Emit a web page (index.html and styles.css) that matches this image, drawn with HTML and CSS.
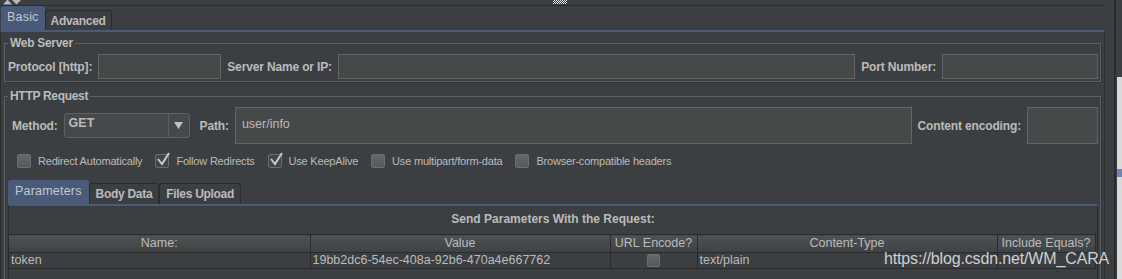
FILE: index.html
```html
<!DOCTYPE html>
<html lang="en">
<head>
    <meta charset="UTF-8">
    <title>HTTP Request</title>
    <link rel="stylesheet" href="styles.css">
</head>
<body>
    <div class="app">
        <div class="editor">
            <div class="split">
                <svg class="expand" width="20" height="5" viewBox="0 0 20 5">
                    <polygon points="1,4.5 5.5,-0.5 10,4.5" fill="#b8b8b8"/>
                    <polygon points="10,0 19,0 14.5,4.5" fill="#b8b8b8"/>
                </svg>
                <div class="grip"></div>
            </div>
            <div class="tabs">
                <div class="tab selected">Basic</div>
                <div class="tab">Advanced</div>
            </div>
            <div class="tabpanel">
                <fieldset class="group">
                    <legend>Web Server</legend>
                    <div class="row">
                        <label>Protocol [http]:</label>
                        <div class="field protocol"></div>
                        <label>Server Name or IP:</label>
                        <div class="field grow"></div>
                        <label>Port Number:</label>
                        <div class="field port"></div>
                    </div>
                </fieldset>
                <fieldset class="group request">
                    <legend>HTTP Request</legend>
                    <div class="row request-row">
                        <label>Method:</label>
                        <div class="combo">
                            <span class="combo-value">GET</span>
                            <span class="combo-btn">
                                <svg width="9" height="7" viewBox="0 0 9 7"><polygon points="0,0 9,0 4.5,7" fill="#c0c0c0"/></svg>
                            </span>
                        </div>
                        <label class="path-label">Path:</label>
                        <div class="field grow tall">user/info</div>
                        <label>Content encoding:</label>
                        <div class="field encoding tall"></div>
                    </div>
                    <div class="options">
                        <span class="check"><span class="box"></span>Redirect Automatically</span>
                        <span class="check"><span class="box checked"><svg width="16" height="16" viewBox="0 0 16 16"><polyline points="3,7 7,12 14,1" fill="none" stroke="#c9c9c9" stroke-width="2"/></svg></span>Follow Redirects</span>
                        <span class="check"><span class="box checked"><svg width="16" height="16" viewBox="0 0 16 16"><polyline points="3,7 7,12 14,1" fill="none" stroke="#c9c9c9" stroke-width="2"/></svg></span>Use KeepAlive</span>
                        <span class="check"><span class="box"></span>Use multipart/form-data</span>
                        <span class="check"><span class="box"></span>Browser-compatible headers</span>
                    </div>
                    <div class="subtabs">
                        <div class="tab selected">Parameters</div>
                        <div class="tab">Body Data</div>
                        <div class="tab">Files Upload</div>
                    </div>
                    <div class="subpanel">
                        <div class="subtitle">Send Parameters With the Request:</div>
                        <table class="params">
                            <colgroup>
                                <col style="width:301px">
                                <col style="width:300px">
                                <col style="width:87px">
                                <col style="width:300px">
                                <col style="width:98px">
                            </colgroup>
                            <tr>
                                <th>Name:</th>
                                <th>Value</th>
                                <th>URL Encode?</th>
                                <th>Content-Type</th>
                                <th>Include Equals?</th>
                            </tr>
                            <tr>
                                <td>token</td>
                                <td>19bb2dc6-54ec-408a-92b6-470a4e667762</td>
                                <td class="center"><span class="box small"></span></td>
                                <td>text/plain</td>
                                <td></td>
                            </tr>
                        </table>
                    </div>
                </fieldset>
            </div>
        </div>
        <div class="side">
            <div class="side-line"></div>
            <div class="side-strip"></div>
        </div>
    </div>
    <div class="watermark">https://blog.csdn.net/WM_CARA</div>
</body>
</html>
```

FILE: styles.css
```css
body {
    margin: 0;
    width: 1122px;
    height: 279px;
    overflow: hidden;
    position: relative;
    background: #3c3f41;
    color: #bbbbbb;
    font-family: "Liberation Sans", Arial, sans-serif;
    font-size: 12px;
}
.app {
    display: flex;
    height: 279px;
}
.editor {
    width: 1105px;
    flex: none;
    display: flex;
    flex-direction: column;
}
.split {
    height: 6px;
    border-bottom: 1px solid #2b2b2b;
    display: flex;
    align-items: flex-start;
}
.expand {
    margin-left: 2px;
}
.grip {
    width: 14px;
    height: 4px;
    margin-left: 531px;
    background: repeating-conic-gradient(#e2e2e2 0 25%, transparent 0 50%) 0 0 / 2px 2px;
}
.tabs,
.subtabs {
    display: flex;
    align-items: flex-end;
}
.tabs {
    height: 25px;
    padding-left: 1px;
}
.tab {
    font-weight: bold;
    letter-spacing: -0.3px;
    height: 19px;
    line-height: 20px;
    padding: 0 5px;
    border: 1px solid #2b2b2b;
    border-bottom: none;
    border-radius: 3px 3px 0 0;
    background: #3c3f41;
}
.tab.selected {
    height: 23px;
    line-height: 21px;
    background: #4a5a79;
    border-color: #4a5a79;
    color: #c4c8d0;
    font-weight: normal;
    font-size: 12.5px;
    letter-spacing: 0.2px;
}
.tabpanel {
    flex: 1;
    border-top: 2px solid #4a5a79;
    border-left: 1px solid #2b2b2b;
    border-right: 1px solid #2b2b2b;
    padding: 4px 3px 0 3px;
}
.group {
    margin: 0;
    min-width: 0;
    border: 1px solid #5d6062;
    box-shadow: 1px 1px 0 #313335;
    padding: 4px 2px 2px 3px;
}
.group legend {
    padding: 0 2px;
    font-weight: bold;
    letter-spacing: -0.3px;
    line-height: 14px;
}
.request {
    margin-top: 7px;
    padding-bottom: 0;
}
.row {
    display: flex;
    align-items: center;
    gap: 6px;
}
label {
    font-weight: bold;
    letter-spacing: -0.15px;
    white-space: nowrap;
}
.field {
    height: 25px;
    box-sizing: border-box;
    background: #45494a;
    border: 1px solid #646464;
    font-size: 12.5px;
    line-height: 33px;
    padding-left: 6px;
}
.protocol {
    width: 123px;
}
.grow {
    flex: 1;
}
.port {
    width: 156px;
}
.request-row {
    margin-left: 4px;
    height: 37px;
}
.tall {
    height: 37px;
}
.encoding {
    width: 71px;
}
.path-label {
    margin-left: 4px;
}
.combo {
    width: 126px;
    height: 25px;
    box-sizing: border-box;
    border: 1px solid #5e6163;
    border-radius: 3px;
    background: #45494a;
    display: flex;
}
.combo-value {
    flex: 1;
    padding-left: 4px;
    font-weight: bold;
    font-size: 12.5px;
    line-height: 19px;
}
.combo-btn {
    width: 20px;
    border-left: 1px solid #5e6163;
    display: flex;
    align-items: center;
    justify-content: center;
}
.options {
    display: flex;
    gap: 13px;
    margin: 10px 0 0 9px;
    font-size: 11px;
    letter-spacing: -0.2px;
    height: 14px;
    line-height: 14px;
}
.check {
    display: flex;
    align-items: center;
    gap: 7px;
}
.box {
    width: 14px;
    height: 14px;
    box-sizing: border-box;
    border: 1px solid #6b6e70;
    border-radius: 2px;
    background: linear-gradient(#64676a, #56595b);
    position: relative;
    display: inline-block;
}
.box.checked {
    background: #43464a;
}
.box.checked svg {
    position: absolute;
    left: -1px;
    top: -3px;
}
.box.small {
    width: 13px;
    height: 13px;
    vertical-align: middle;
}
.subtabs {
    margin-top: 13px;
    height: 23px;
}
.subtabs .tab {
    padding: 0 6px;
    height: 20px;
}
.subtabs .tab.selected {
    height: 23px;
    padding: 0 6px;
    line-height: 20px;
}
.subpanel {
    border-top: 2px solid #4a5a79;
    border-left: 1px solid #2b2b2b;
    border-right: 1px solid #2b2b2b;
    height: 80px;
}
.subtitle {
    text-align: center;
    font-weight: bold;
    height: 28px;
    line-height: 27px;
}
.params {
    border-collapse: collapse;
    table-layout: fixed;
    width: 1086px;
    font-size: 12.5px;
}
.params th {
    height: 17px;
    padding: 0;
    font-weight: normal;
    background: linear-gradient(#4e5254, #3f4244);
    border: 1px solid #2b2b2b;
    border-left: none;
    line-height: 17px;
}
.params td {
    height: 15px;
    padding: 0 2px;
    line-height: 15px;
    border-right: 1px solid #2b2b2b;
    border-bottom: 1px solid #2b2b2b;
    white-space: nowrap;
}
.params .center {
    text-align: center;
}
.side {
    flex: 1;
    display: flex;
    padding-left: 9px;
}
.side-line {
    width: 2px;
    background: #2b2b2b;
}
.side-strip {
    flex: 1;
    margin-left: 1px;
    margin-top: 77px;
    background: linear-gradient(#dedede, #dedede) 0 40px / 100% 1px no-repeat, linear-gradient(#6b86b3, #6b86b3) 0 92px / 100% 8px no-repeat, #d9d9d9;
}
.watermark {
    position: absolute;
    left: 884px;
    top: 250px;
    font-size: 16px;
    letter-spacing: -0.15px;
    line-height: 18px;
    color: rgba(235, 235, 235, 0.85);
}
```
